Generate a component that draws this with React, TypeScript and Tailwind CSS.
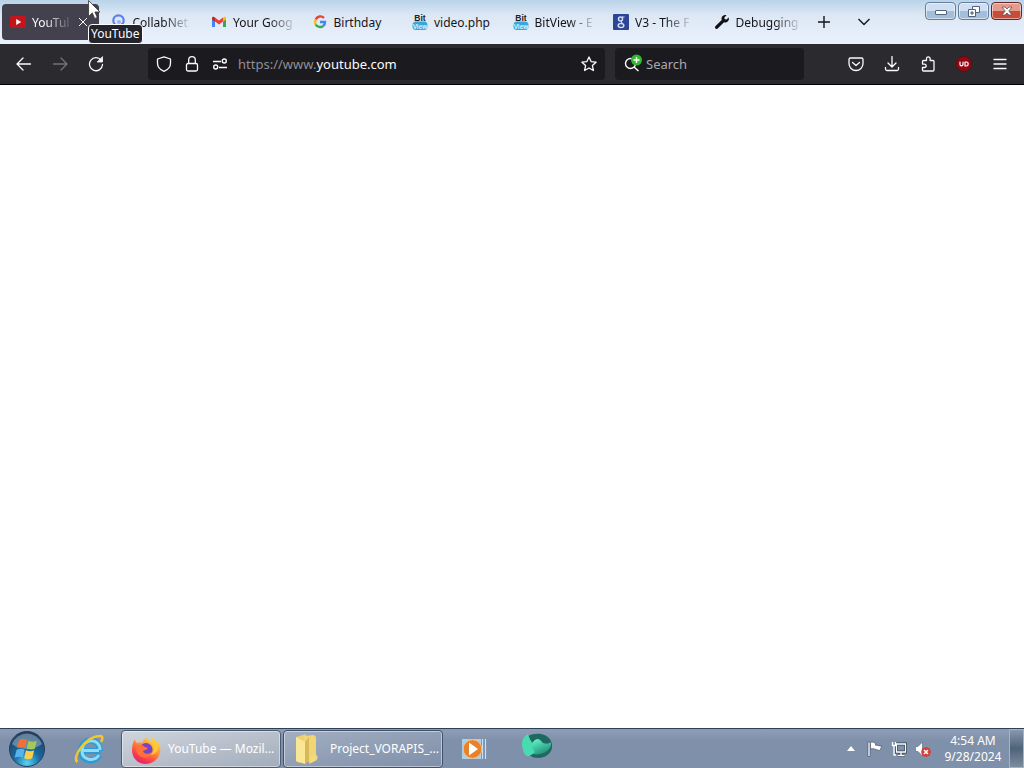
import type { ReactNode } from "react";

function YouTubeIcon() {
  return (
    <svg viewBox="0 0 16 16" className="h-4 w-4 shrink-0">
      <rect y="2" width="16" height="12" rx="2" fill="#c4141c" />
      <path d="M6.2 5v6l5-3z" fill="#fff" />
    </svg>
  );
}

function CollabIcon() {
  return (
    <svg viewBox="0 0 16 16" className="h-4 w-4 shrink-0" fill="none">
      <circle cx="7.5" cy="6.5" r="5.2" fill="#dbe6ff" stroke="#5c7fe8" strokeWidth="2.2" />
      <circle cx="8" cy="8" r="2" fill="#9bb2f2" />
      <path d="m10 10 4 4" stroke="#4a5ed0" strokeWidth="2" />
    </svg>
  );
}

function GmailIcon() {
  return (
    <svg viewBox="0 0 16 16" className="h-4 w-4 shrink-0">
      <path d="M1 4.5v8.6h3V7z" fill="#4285f4" />
      <path d="M15 4.5v8.6h-3V7z" fill="#34a853" />
      <path d="M4 3.6v4L8 10.6l4-3v-4L8 6.6z" fill="#ea4335" />
      <path d="M1 4.2v1.2l3 2.3v-4C2.8 2.2 1 2.7 1 4.2z" fill="#c5221f" />
      <path d="M15 4.2v1.2l-3 2.3v-4c1.2-1.5 3-1 3 .5z" fill="#fbbc04" />
    </svg>
  );
}

function GoogleIcon() {
  return (
    <svg viewBox="0 0 16 16" className="h-4 w-4 shrink-0" fill="none" strokeWidth="2.4">
      <path d="M12 4A5 5 0 0 0 3.7 5.5" stroke="#ea4335" />
      <path d="M3.7 5.5a5 5 0 0 0 0 5" stroke="#fbbc05" />
      <path d="M3.7 10.5A5 5 0 0 0 11.3 11.8" stroke="#34a853" />
      <path d="M11.3 11.8A5 5 0 0 0 13 8H8" stroke="#4285f4" />
    </svg>
  );
}

function BitViewIcon() {
  return (
    <svg viewBox="0 0 16 16" className="h-4 w-4 shrink-0">
      <rect x="0.5" y="7.5" width="15" height="8.5" rx="3.5" fill="#38a7da" />
      <text x="8" y="6.5" textAnchor="middle" fontSize="8.5" fontWeight="700" fontFamily="Liberation Sans, sans-serif" fill="#222">
        Bit
      </text>
      <text x="8" y="14.5" textAnchor="middle" fontSize="6.5" fontWeight="700" fontFamily="Liberation Sans, sans-serif" fill="#d8f4ff">
        View
      </text>
    </svg>
  );
}

function OldGoogleIcon() {
  return (
    <svg viewBox="0 0 16 16" className="h-4 w-4 shrink-0" fill="none">
      <rect width="16" height="16" rx="1" fill="#2c4594" />
      <circle cx="7.5" cy="5" r="2" stroke="#d3dcf8" strokeWidth="1.5" />
      <ellipse cx="8" cy="11.5" rx="2.8" ry="2" stroke="#d3dcf8" strokeWidth="1.5" />
      <path d="M9 3h2.5M8 7l1 2" stroke="#d3dcf8" strokeWidth="1.2" />
    </svg>
  );
}

function WrenchIcon() {
  return (
    <svg viewBox="0 0 16 16" className="h-4 w-4 shrink-0">
      <path
        d="M14.7 3.5 12.5 5.6 10.7 5.2 10.3 3.5 12.5 1.3C10.3.5 7.6 2 7.5 4.6c0 .6.1 1 .2 1.4L1.4 12.2c-1.4 1.5.8 3.7 2.3 2.3L10 8.3c3 1 5.7-1.8 4.7-4.8z"
        fill="#111"
      />
    </svg>
  );
}

const tabs: { title: string; icon: ReactNode; fades?: boolean }[] = [
  { title: "YouTube", icon: <YouTubeIcon />, fades: true },
  { title: "CollabNet", icon: <CollabIcon />, fades: true },
  { title: "Your Goog", icon: <GmailIcon />, fades: true },
  { title: "Birthday", icon: <GoogleIcon /> },
  { title: "video.php", icon: <BitViewIcon /> },
  { title: "BitView - E", icon: <BitViewIcon />, fades: true },
  { title: "V3 - The F", icon: <OldGoogleIcon />, fades: true },
  { title: "Debugging", icon: <WrenchIcon />, fades: true },
];

const fade = "[mask-image:linear-gradient(to_right,black_calc(100%-24px),rgba(0,0,0,0.15))]";

function Tab({ title, icon, fades, active }: { title: string; icon: ReactNode; fades?: boolean; active: boolean }) {
  return (
    <div className="relative min-w-0 flex-1 pr-1">
      <div className={`flex h-9 items-center rounded ${active ? "bg-[#42414d] text-[#fbfbfe]" : "text-[#15141a]"}`}>
        <button type="button" className="flex h-full min-w-0 flex-1 items-center gap-1.5 pl-2 text-left">
          {icon}
          <span className={`pt-0.5 whitespace-nowrap ${active ? "min-w-0 flex-1 overflow-hidden" : ""} ${fades ? fade : ""}`}>{title}</span>
        </button>
        {active && (
          <button type="button" aria-label="Close tab" className="-ml-0.5 flex h-6 w-8 shrink-0 items-center justify-center">
            <svg viewBox="0 0 10 10" className="h-2.5 w-2.5" stroke="currentColor">
              <path d="m1 1 8 8M9 1 1 9" />
            </svg>
          </button>
        )}
      </div>
      {active && (
        <>
          <div role="tooltip" className="absolute top-5 left-[86px] z-10 rounded border border-white bg-[#25242d] px-0.5 text-xs leading-[18px] text-[#fbfbfe]">
            {title}
          </div>
          <svg viewBox="0 0 13 20" className="absolute -top-1 left-[86px] z-20 h-5 w-[13px]">
            <path d="M.5.5v16l3.8-3.6 2.4 5.7 2.6-1.1-2.4-5.5H12z" fill="#fff" stroke="#333" strokeWidth="0.8" />
          </svg>
        </>
      )}
    </div>
  );
}

function ToolButton({ label, children, className = "" }: { label: string; children: ReactNode; className?: string }) {
  return (
    <button type="button" aria-label={label} className={`flex h-8 w-9 shrink-0 items-center justify-center ${className}`}>
      <svg viewBox="0 0 16 16" className="h-4 w-4" fill="none" stroke="currentColor" strokeWidth="1.3" strokeLinecap="round" strokeLinejoin="round">
        {children}
      </svg>
    </button>
  );
}

function WindowControls() {
  const base = "flex h-[18px] w-[31px] items-center justify-center rounded-sm border shadow-[inset_0_0_0_1px_rgba(255,255,255,0.5)]";
  const glass = "border-[#647e9f] bg-linear-to-b from-[#cfdff1] from-50% to-[#a3bedb] to-50%";
  return (
    <div className="flex gap-0.5 self-start pt-0.5 pr-0.5">
      <button type="button" aria-label="Minimize" className={`${base} ${glass}`}>
        <svg viewBox="0 0 12 10" className="h-2.5 w-3">
          <rect x="0.5" y="4.5" width="11" height="4" rx="0.5" fill="#fff" stroke="#52647d" />
        </svg>
      </button>
      <button type="button" aria-label="Restore" className={`${base} ${glass}`}>
        <svg viewBox="0 0 12 11" className="h-[11px] w-3" fill="#fff" stroke="#52647d">
          <path d="M4.5.5h7v6h-7z" />
          <path d="M.5 3.5h7v7h-7z" />
          <path d="M3 6h2v2H3z" fill="#a3bedb" />
        </svg>
      </button>
      <button type="button" aria-label="Close" className={`${base} border-[#6c2525] bg-linear-to-b from-[#e39b8c] from-50% to-[#c94c38] to-50%`}>
        <svg viewBox="0 0 12 10" className="h-2.5 w-3">
          <path d="M1 1h3l2 2 2-2h3L7.8 5 11 9H8L6 7 4 9H1l3.2-4z" fill="#fff" stroke="#645158" strokeWidth="0.8" />
        </svg>
      </button>
    </div>
  );
}

function TabStrip() {
  return (
    <header className="flex h-11 shrink-0 bg-linear-to-b from-[#b9d3e9] via-[#dde8f5] via-35% to-[#e9f1fc] text-xs">
      <div className="flex min-w-0 flex-1 items-center pl-0.5">
        {tabs.map((tab, i) => (
          <Tab key={tab.title} title={tab.title} icon={tab.icon} fades={tab.fades} active={i === 0} />
        ))}
      </div>
      <div className="flex w-[119px] shrink-0 items-center text-[#15141a]">
        <button type="button" aria-label="New tab" className="flex h-9 w-9 items-center justify-center">
          <svg viewBox="0 0 12 12" className="h-3 w-3" stroke="currentColor" strokeWidth="1.4">
            <path d="M6 0v12M0 6h12" />
          </svg>
        </button>
        <button type="button" aria-label="List all tabs" className="ml-1 flex h-9 w-9 items-center justify-center">
          <svg viewBox="0 0 12 8" className="h-2 w-3" fill="none" stroke="currentColor" strokeWidth="1.4">
            <path d="m.5 1 5.5 5.5L11.5 1" />
          </svg>
        </button>
      </div>
      <WindowControls />
    </header>
  );
}

function NavBar() {
  return (
    <nav className="flex h-[41px] shrink-0 items-center border-b border-black bg-[#2a2a2f] px-1.5 text-[13px] text-[#fbfbfe]">
      <ToolButton label="Back">
        <path d="M14.5 8h-13M7 2 1 8l6 6" />
      </ToolButton>
      <ToolButton label="Forward" className="text-[#74737a]">
        <path d="M1.5 8h13M9 2l6 6-6 6" />
      </ToolButton>
      <ToolButton label="Reload">
        <path d="M13.2 4.3A6.5 6.5 0 1 0 14.5 8.5" />
        <path d="M14.5 1v5h-5z" fill="currentColor" strokeWidth="0.8" />
      </ToolButton>
      <div className="ml-[34px] flex h-8 min-w-0 flex-1 items-center rounded bg-[#1b1b1f] pl-0.5">
        <button type="button" aria-label="Tracking protection" className="flex h-7 w-7 shrink-0 items-center justify-center">
          <svg viewBox="0 0 16 16" className="h-4 w-4" fill="none" stroke="currentColor" strokeWidth="1.3" strokeLinejoin="round">
            <path d="M8 .8 14.5 3v4.2c0 3.6-2.5 6.5-6.5 8.1C4 13.7 1.5 10.8 1.5 7.2V3z" />
          </svg>
        </button>
        <button type="button" aria-label="Site security" className="flex h-7 w-7 shrink-0 items-center justify-center">
          <svg viewBox="0 0 16 16" className="h-4 w-4" fill="none" stroke="currentColor" strokeWidth="1.3">
            <rect x="2.5" y="7.5" width="11" height="7.5" rx="1.5" />
            <path d="M4.7 7.5V4a3.3 3.3 0 0 1 6.6 0v3.5" />
          </svg>
        </button>
        <button type="button" aria-label="Site permissions" className="flex h-7 w-7 shrink-0 items-center justify-center">
          <svg viewBox="0 0 16 16" className="h-4 w-4" fill="none" stroke="currentColor" strokeWidth="1.4">
            <path d="M1 5.5h8M7 11.5h8" />
            <circle cx="12.3" cy="5" r="2" />
            <circle cx="3.7" cy="11" r="2" />
          </svg>
        </button>
        <a href="https://www.youtube.com" className="ml-1 min-w-0 flex-1 truncate pt-0.5 text-[#8f8e96]">
          https://www.<span className="text-[#fbfbfe]">youtube.com</span>
        </a>
        <ToolButton label="Bookmark this page" className="-mr-0.5">
          <path d="m8 1 2.1 4.6 5 .6-3.7 3.4 1 4.9L8 12l-4.4 2.5 1-4.9L.9 6.2l5-.6z" />
        </ToolButton>
      </div>
      <label className="ml-2.5 flex h-8 w-[189px] shrink-0 items-center rounded bg-[#1b1b1f] pl-2">
        <svg viewBox="0 0 20 20" className="h-5 w-5 shrink-0" fill="none">
          <circle cx="7.5" cy="9.5" r="5" stroke="#fbfbfe" strokeWidth="1.4" />
          <path d="m11 13 4.5 4" stroke="#fbfbfe" strokeWidth="1.5" />
          <circle cx="13.5" cy="6" r="5.5" fill="#32b92e" />
          <path d="M13.5 3v6M10.5 6h6" stroke="#fff" strokeWidth="1.4" />
        </svg>
        <input
          type="text"
          aria-label="Search"
          placeholder="Search"
          className="ml-[3px] min-w-0 flex-1 bg-transparent pt-0.5 outline-none placeholder:text-[#a9a8af]"
        />
      </label>
      <div className="ml-[34px] flex shrink-0">
        <ToolButton label="Save to Pocket">
          <path d="M2.5 2h11A1.5 1.5 0 0 1 15 3.5v4a7 7 0 0 1-14 0v-4A1.5 1.5 0 0 1 2.5 2zM4.5 6.5l3.5 3 3.500-3" />
        </ToolButton>
        <ToolButton label="Downloads">
          <path d="M8 .5v10M4 7l4 4 4-4M1.5 11.5V13A1.5 1.5 0 0 0 3 14.5h10a1.5 1.5 0 0 0 1.5-1.5v-1.5" />
        </ToolButton>
        <ToolButton label="Extensions">
          <path d="M6.5 4.5V2.7a1.8 1.8 0 0 1 3.6 0v1.8H13a1 1 0 0 1 1 1V14a1 1 0 0 1-1 1H3.5a1 1 0 0 1-1-1v-2.5h2a1.7 1.7 0 0 0 0-3.4h-2V5.5a1 1 0 0 1 1-1z" />
        </ToolButton>
        <ToolButton label="uBlock Origin">
          <path d="M5 .8h6L15.2 5v6L11 15.2H5L.8 11V5z" fill="#930812" stroke="#650c15" strokeWidth="1" />
          <path d="M4 6v2.5c0 1.8 3 1.800 3 0V6" stroke="#fff" strokeWidth="1.2" />
          <path d="M9 6v4h1.500c2.200 0 2.200-4 0-4z" stroke="#fff" strokeWidth="1.2" />
        </ToolButton>
        <ToolButton label="Open application menu">
          <path d="M2 3.5h12M2 8h12M2 12.5h12" />
        </ToolButton>
      </div>
    </nav>
  );
}

function StartOrb() {
  return (
    <svg viewBox="0 0 38 38" className="h-[38px] w-[38px]">
      <defs>
        <radialGradient id="orb" cx="50%" cy="90%" r="85%">
          <stop offset="0" stopColor="#55d5f4" />
          <stop offset="0.45" stopColor="#19699f" />
          <stop offset="1" stopColor="#233e60" />
        </radialGradient>
      </defs>
      <circle cx="19" cy="19" r="17.5" fill="url(#orb)" stroke="#253f5c" />
      <path d="M4 14a16 16 0 0 1 30 0c-7 6-21 7-30 0z" fill="#c7dce7" opacity="0.4" />
      <path d="M11 10c3-1.5 5.5-1.3 8 0l-1.9 8c-2.5-1.3-5.2-1.3-8.1 0z" fill="#ef7138" />
      <path d="M20.5 10.7c2.8 1.5 5.5 1.2 8.3 0l-2 8c-2.5 1.2-5.2 1-8-.2z" fill="#a3ca58" />
      <path d="M8.6 19.8c2.8-1.4 5.5-1.3 8 0l-1.9 8c-2.5-1.3-5.2-1.3-8.1 0z" fill="#55b4ec" />
      <path d="M18 20.3c2.8 1.4 5.5 1.3 8.2 0l-2 8c-2.6 1.3-5.3 1.2-8.1-.1z" fill="#fbce4b" />
    </svg>
  );
}

function ExplorerIcon() {
  return (
    <svg viewBox="0 0 32 32" className="h-8 w-8" fill="none">
      <path d="M27.5 18h-18M27 18c0-14-19-14-19 0 0 11 14 12.500 18.500 4" stroke="#2e9bd4" strokeWidth="6" />
      <path d="M26 17.5H9M27 17c0-13-18-12-18 1 0 9 12 11.500 17 4" stroke="#8bdef6" strokeWidth="3" />
      <path d="M4.5 29C-2 25 13 3 27 3c3 0 3 3 1 6" stroke="#f2c72d" strokeWidth="2.5" />
    </svg>
  );
}

function FirefoxIcon() {
  return (
    <svg viewBox="0 0 32 32" className="h-8 w-8 shrink-0">
      <defs>
        <linearGradient id="fox" x1="0.8" y1="0" x2="0.2" y2="1">
          <stop offset="0" stopColor="#ffe34b" />
          <stop offset="0.4" stopColor="#ff9137" />
          <stop offset="0.75" stopColor="#fa3c4e" />
          <stop offset="1" stopColor="#d91978" />
        </linearGradient>
      </defs>
      <path d="M5 6c0 2 1 3 2 4 2-1 4-1 5 0 1-3 3-5 5-6 0 3 3 4 5 6 1-2 0-4-1-6 3 1 5 4 6 7l1-2c2 3 3 7 2 11C28 27 22 31 15.5 31 8 31 2 25 2 17c0-4 1-8 3-11z" fill="url(#fox)" />
      <circle cx="16" cy="16.5" r="6.5" fill="#7544c7" />
      <path d="M6 13c4-2 7-1 9 1l3 1c-1 2-4 2-5 3 1 3 5 4 9 1-1 5-6 7-10 5-4-1-7-6-6-11z" fill="#ff7139" />
      <path d="M17 4c0 4 5 5 6 9 2 5-1 8-3 9 5 0 8-4 8-8 0-5-4-8-7-10 1 2 2 4 1 6-2-2-5-3-5-6z" fill="#ffc934" />
    </svg>
  );
}

function FolderIcon() {
  return (
    <svg viewBox="0 0 32 32" className="h-8 w-8 shrink-0">
      <path d="m4 4 10-3v26l-7 3-3-2z" fill="#ecd16d" />
      <path d="m12 3 10-1 2 2v17l2 4-9 4-5-2z" fill="#f0d676" />
      <path d="m4 4 9 5v22l-9-3z" fill="#f9e796" />
      <path d="m13 9 4-5v24l-4 3z" fill="#d9b957" />
      <path d="m19 24 5-1 1 4-8 4z" fill="#f3dc7c" />
    </svg>
  );
}

function MediaPlayerIcon() {
  return (
    <svg viewBox="0 0 26 24" className="h-6 w-[26px]">
      <path d="M1 2h19v20H1z" fill="#aecfe8" />
      <path d="M21.5 2v20M24.5 2v20" stroke="#c5e3f5" strokeWidth="1.2" />
      <circle cx="11.5" cy="12" r="9.3" fill="#e7822a" stroke="#f9bc78" strokeWidth="1" />
      <path d="M8 5.5v13l9-6.500z" fill="#fff" />
    </svg>
  );
}

function GreenOrbIcon() {
  return (
    <svg viewBox="0 0 32 28" className="h-7 w-8">
      <defs>
        <linearGradient id="green" x1="0" y1="0" x2="0.6" y2="1">
          <stop offset="0.2" stopColor="#5ceac2" />
          <stop offset="1" stopColor="#23907a" />
        </linearGradient>
      </defs>
      <path d="M7 3C15-1 26 0 30 8c4 9-3 17-13 17-4 0-7-1-9-4z" fill="#1f6860" />
      <path d="M9 13c2-3 4-6 7-7 3 0 4 2 6 4 3 1 6 1 8-1 1 7-5 11-11 12-4 1-8 0-11-2z" fill="url(#green)" />
      <path d="M7 1C1 4 0 11 2 16c0 4 3 8 6 7 2-1 4-2 6-4-2-3-4-5-2-8-2-3-4-6-5-10z" fill="#46dcb0" />
    </svg>
  );
}

function Taskbar() {
  const item = "flex h-[38px] w-40 items-center gap-1.5 rounded-sm border px-2 text-white shadow-[inset_0_0_0_1px_rgba(255,255,255,0.45)]";
  return (
    <footer className="flex h-10 shrink-0 items-center border-t border-[#2d4058] bg-linear-to-b from-[#8d9cb4] from-5% to-[#7f90aa] to-30% text-xs text-white">
      <button type="button" aria-label="Start" className="ml-2 shrink-0">
        <StartOrb />
      </button>
      <button type="button" aria-label="Internet Explorer" className="ml-[27px] shrink-0">
        <ExplorerIcon />
      </button>
      <div className="ml-4 flex shrink-0 gap-0.5">
        <button type="button" className={`${item} border-[#4c5c70] bg-linear-to-br from-[#d0d5dd] to-[#a2acbb]`}>
          <FirefoxIcon />
          <span className="whitespace-nowrap">YouTube — Mozil...</span>
        </button>
        <button type="button" className={`${item} border-[#405169] bg-linear-to-br from-[#a3afc1] to-[#7e8fa9]`}>
          <FolderIcon />
          <span className="whitespace-nowrap">Project_VORAPIS_...</span>
        </button>
      </div>
      <button type="button" aria-label="Windows Media Player" className="ml-[18px] shrink-0">
        <MediaPlayerIcon />
      </button>
      <button type="button" aria-label="Green sphere" className="mb-1 ml-[34px] shrink-0">
        <GreenOrbIcon />
      </button>
      <div className="ml-auto flex h-full shrink-0 items-center">
        <button type="button" aria-label="Show hidden icons" className="mr-3">
          <svg viewBox="0 0 8 5" className="h-[5px] w-2">
            <path d="M0 5h8L4 0z" fill="#fff" />
          </svg>
        </button>
        <div className="mr-1.5 flex gap-2">
          <button type="button" aria-label="Action Center">
            <svg viewBox="0 0 16 16" className="h-4 w-4" stroke="#36475e" strokeWidth="0.6">
              <path d="M1 1h2v14.5H1z" fill="#fff" />
              <path d="M3.5 1.5c2-1 3.5 0 5 1v1.7c2-.3 3.5 1 6.5.8-1.500 1.500-1 3.500-2.500 4.500-2-.3-3-1-5-1.500-1-.5-2.500-.5-4 0z" fill="#fff" />
            </svg>
          </button>
          <button type="button" aria-label="Network">
            <svg viewBox="0 0 16 16" className="h-4 w-4" fill="none">
              <path d="M5.5 3h9v8h-9zM10 11v3M6.5 14.5h7" stroke="#33445b" strokeWidth="3" />
              <path d="M5.5 3h9v8h-9zM10 11v3M6.5 14.5h7" stroke="#fff" strokeWidth="1.3" />
              <path d="M1.500 1v3.500h3V1M3 4.500V14h2" stroke="#fff" strokeWidth="1.3" />
            </svg>
          </button>
          <button type="button" aria-label="Volume muted">
            <svg viewBox="0 0 16 16" className="h-4 w-4">
              <path d="M.5 5.5H3L7.5 1v14L3 10.5H.5z" fill="#fff" stroke="#52637b" strokeWidth="0.6" />
              <circle cx="11" cy="11" r="4.8" fill="#d53d35" />
              <path d="m9 9 4 4M13 9l-4 4" stroke="#fff" strokeWidth="1.5" />
            </svg>
          </button>
        </div>
        <button type="button" className="w-[72px] text-center leading-4">
          <time dateTime="2024-09-28T04:54" className="block">
            4:54 AM
            <br />
            9/28/2024
          </time>
        </button>
        <button
          type="button"
          aria-label="Show desktop"
          className="h-full w-[15px] border border-[#a4b3c5] bg-linear-to-b from-[#8998ac] via-[#4f6379] to-[#7c8c9f]"
        />
      </div>
    </footer>
  );
}

export default function App() {
  return (
    <div className="flex h-screen flex-col overflow-hidden bg-white font-['Noto_Sans','Open_Sans',sans-serif]">
      <TabStrip />
      <NavBar />
      <main className="min-h-0 flex-1 bg-white" />
      <Taskbar />
    </div>
  );
}
